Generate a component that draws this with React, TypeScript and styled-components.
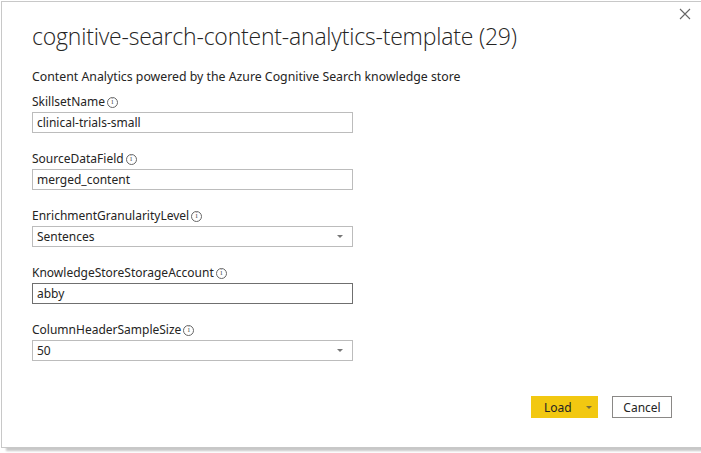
import React from "react";
import styled, { createGlobalStyle } from "styled-components";

const Global = createGlobalStyle`
  html, body { margin: 0; padding: 0; background: #ffffff; overflow: hidden; }
  body { font-family: "Segoe UI", "Noto Sans", "Open Sans", sans-serif; color: #252423; }
  * { box-sizing: border-box; }
`;

const Page = styled.div`
  width: 701px;
  height: 453px;
  padding: 1px 0 0 1px;
  overflow: hidden;
`;

const Dialog = styled.div`
  position: relative;
  width: 740px;
  height: 447px;
  background: #fff;
  border: 1px solid #c8c8c8;
  box-shadow: 5px 3px 2px rgba(0, 0, 0, 0.22);
  padding: 17px 0 0 30px;
  display: flex;
  flex-direction: column;
`;

const Close = styled.button`
  position: absolute;
  top: 4px;
  left: 675px;
  width: 16px;
  height: 16px;
  padding: 0;
  border: none;
  background: transparent;
  display: flex;
  align-items: center;
  justify-content: center;
`;

const Title = styled.h1`
  margin: 0;
  font-family: "Open Sans", "Noto Sans", sans-serif;
  font-weight: 300;
  font-size: 23px;
  line-height: 34px;
  color: #252423;
  letter-spacing: -0.2px;
`;

const Subtitle = styled.p`
  margin: 16px 0 7px 0;
  font-family: "Noto Sans", sans-serif;
  font-size: 12.3px;
  line-height: 16px;
  color: #252423;
`;

const Field = styled.div`
  display: flex;
  flex-direction: column;
  margin-bottom: 16px;
`;

const Label = styled.label`
  display: flex;
  align-items: center;
  gap: 2px;
  font-family: "Noto Sans", sans-serif;
  font-size: 12px;
  line-height: 16px;
  height: 20px;
  color: #252423;
`;

const Info = styled.span`
  display: inline-flex;
  width: 11px;
  height: 11px;
  border: 1px solid #666;
  border-radius: 50%;
  align-items: center;
  justify-content: center;
  font-size: 8px;
  line-height: 1;
  color: #555;
  font-family: "Liberation Serif", serif;
`;

const Box = styled.div<{ $dark?: boolean }>`
  width: 321px;
  height: 21px;
  border: 1px solid ${(p) => (p.$dark ? "#6f6f6f" : "#bcbcbc")};
  display: flex;
  align-items: center;
  justify-content: space-between;
  padding: 0 8px 0 4px;
  font-family: "Noto Sans", sans-serif;
  font-size: 12px;
  color: #252423;
`;

const Caret = styled.span`
  width: 0;
  height: 0;
  border-left: 3px solid transparent;
  border-right: 3px solid transparent;
  border-top: 3px solid #777;
  margin-right: 1px;
`;

const Footer = styled.div`
  display: flex;
  gap: 14px;
  margin-top: 19px;
  padding-left: 499px;
`;

const LoadButton = styled.button`
  width: 67px;
  height: 22px;
  background: #f2c811;
  border: none;
  display: flex;
  align-items: center;
  padding: 0 0 0 13px;
  font-family: "Noto Sans", sans-serif;
  font-size: 12px;
  color: #252423;
  gap: 14px;
`;

const SmallCaret = styled.span`
  width: 0;
  height: 0;
  border-left: 3px solid transparent;
  border-right: 3px solid transparent;
  border-top: 3px solid #7a6d3a;
`;

const CancelButton = styled.button`
  width: 60px;
  height: 22px;
  background: #fff;
  border: 1px solid #8a8886;
  font-family: "Noto Sans", sans-serif;
  font-size: 12px;
  color: #252423;
  padding: 0;
`;

const fields: { label: string; value: string; select?: boolean; dark?: boolean }[] = [
  { label: "SkillsetName", value: "clinical-trials-small" },
  { label: "SourceDataField", value: "merged_content" },
  { label: "EnrichmentGranularityLevel", value: "Sentences", select: true },
  { label: "KnowledgeStoreStorageAccount", value: "abby", dark: true },
  { label: "ColumnHeaderSampleSize", value: "50", select: true },
];

export default function App() {
  return (
    <Page>
      <Global />
      <Dialog>
        <Close aria-label="Close">
          <svg width="12" height="12" viewBox="0 0 12 12">
            <path d="M1 1 L11 11 M11 1 L1 11" stroke="#666" strokeWidth="1.1" />
          </svg>
        </Close>
        <Title>cognitive-search-content-analytics-template (29)</Title>
        <Subtitle>Content Analytics powered by the Azure Cognitive Search knowledge store</Subtitle>
        {fields.map((f) => (
          <Field key={f.label}>
            <Label>
              {f.label}
              <Info>i</Info>
            </Label>
            <Box $dark={f.dark}>
              <span>{f.value}</span>
              {f.select && <Caret />}
            </Box>
          </Field>
        ))}
        <Footer>
          <LoadButton>
            Load
            <SmallCaret />
          </LoadButton>
          <CancelButton>Cancel</CancelButton>
        </Footer>
      </Dialog>
    </Page>
  );
}
